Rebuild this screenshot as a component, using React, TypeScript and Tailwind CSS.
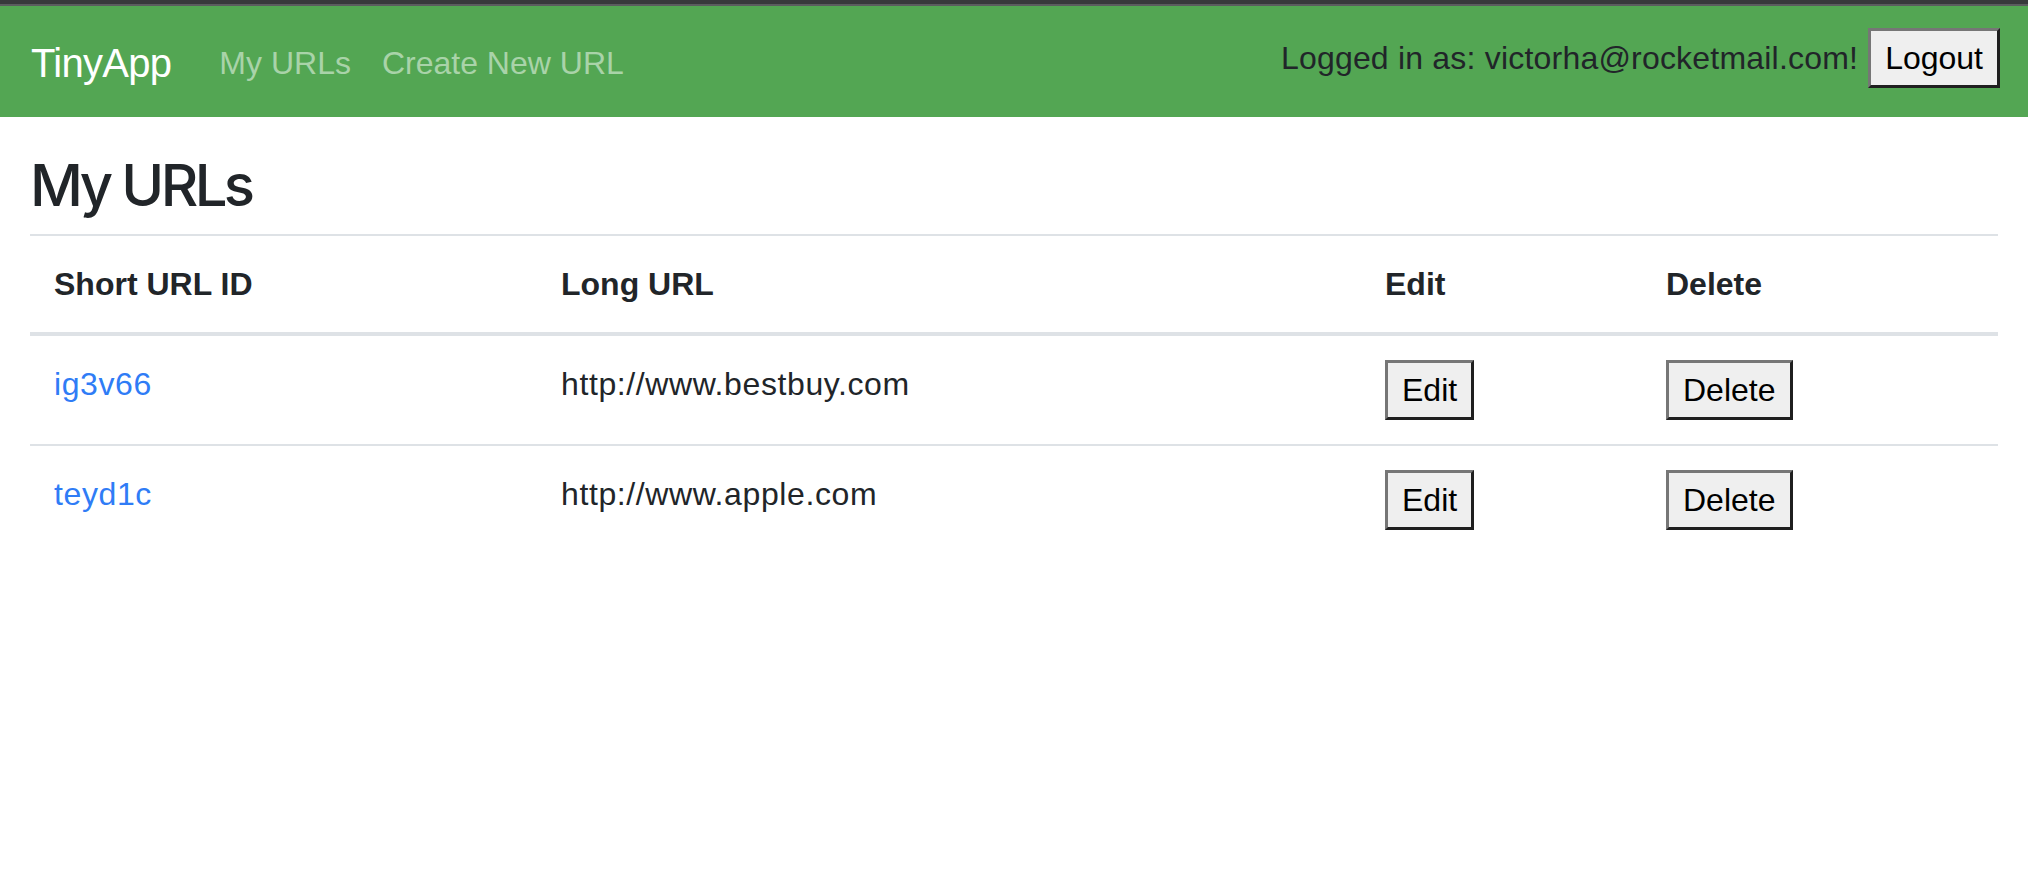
import React from 'react'

type Row = { id: string; longUrl: string }

const urls: Row[] = [
  { id: 'ig3v66', longUrl: 'http://www.bestbuy.com' },
  { id: 'teyd1c', longUrl: 'http://www.apple.com' },
]

function OldButton({ children }: { children: React.ReactNode }) {
  return (
    <button
      type="button"
      className="inline-flex h-[60px] items-center justify-center border-[3px] border-solid border-t-[#767676] border-l-[#767676] border-b-[#1f1f1f] border-r-[#1f1f1f] bg-[#efefef] px-[14px] text-[32px] leading-none tracking-normal text-black"
    >
      {children}
    </button>
  )
}

function Navbar() {
  return (
    <header>
      <div className="h-[4px] bg-[#38393c]" />
      <div className="h-[2px] bg-[#5b5c5f]" />
      <nav className="flex h-[111px] items-center justify-between bg-[#53a653] pl-[31px] pr-[28px]">
        <div className="flex items-center pt-[3px]">
          <a href="#" className="mr-[48px] text-[40px] leading-none tracking-[-0.7px] text-white">TinyApp</a>
          <div className="flex items-center gap-[31px] text-[32px] leading-none text-[#a9d3a9]">
            <a href="#">My URLs</a>
            <a href="#">Create New URL</a>
          </div>
        </div>
        <div className="flex items-center gap-[10px] pb-[8px]">
          <span className="text-[32px] leading-none tracking-[0.2px] text-[#212529]">Logged in as: victorha@rocketmail.com!</span>
          <OldButton>Logout</OldButton>
        </div>
      </nav>
    </header>
  )
}

export default function App() {
  return (
    <div className="min-h-screen bg-white font-['Liberation_Sans',Arial,sans-serif] text-[#212529]">
      <Navbar />
      <main className="px-[30px]">
        <h1 className="mt-[33px] mb-[14px] font-['Inter',sans-serif] text-[58px] font-medium leading-[70px] tracking-[-3.6px]">My URLs</h1>
        <table className="w-full table-fixed border-collapse text-[32px] leading-[48px]">
          <colgroup>
            <col className="w-[507px]" />
            <col className="w-[824px]" />
            <col className="w-[281px]" />
            <col className="w-[356px]" />
          </colgroup>
          <thead>
            <tr className="border-t-2 border-b-4 border-[#dee2e6]">
              <th className="p-[24px] text-left align-top font-bold">Short URL ID</th>
              <th className="p-[24px] text-left align-top font-bold">Long URL</th>
              <th className="p-[24px] text-left align-top font-bold">Edit</th>
              <th className="p-[24px] text-left align-top font-bold">Delete</th>
            </tr>
          </thead>
          <tbody>
            {urls.map((u, i) => (
              <tr key={u.id} className={i > 0 ? 'border-t-2 border-[#dee2e6]' : ''}>
                <td className="p-[24px] align-top tracking-[0.6px]">
                  <a href="#" className="text-[#2f7cf6]">{u.id}</a>
                </td>
                <td className="p-[24px] align-top tracking-[0.6px]">{u.longUrl}</td>
                <td className="p-[24px] align-top">
                  <div className="flex"><OldButton>Edit</OldButton></div>
                </td>
                <td className="p-[24px] align-top">
                  <div className="flex"><OldButton>Delete</OldButton></div>
                </td>
              </tr>
            ))}
          </tbody>
        </table>
      </main>
    </div>
  )
}
